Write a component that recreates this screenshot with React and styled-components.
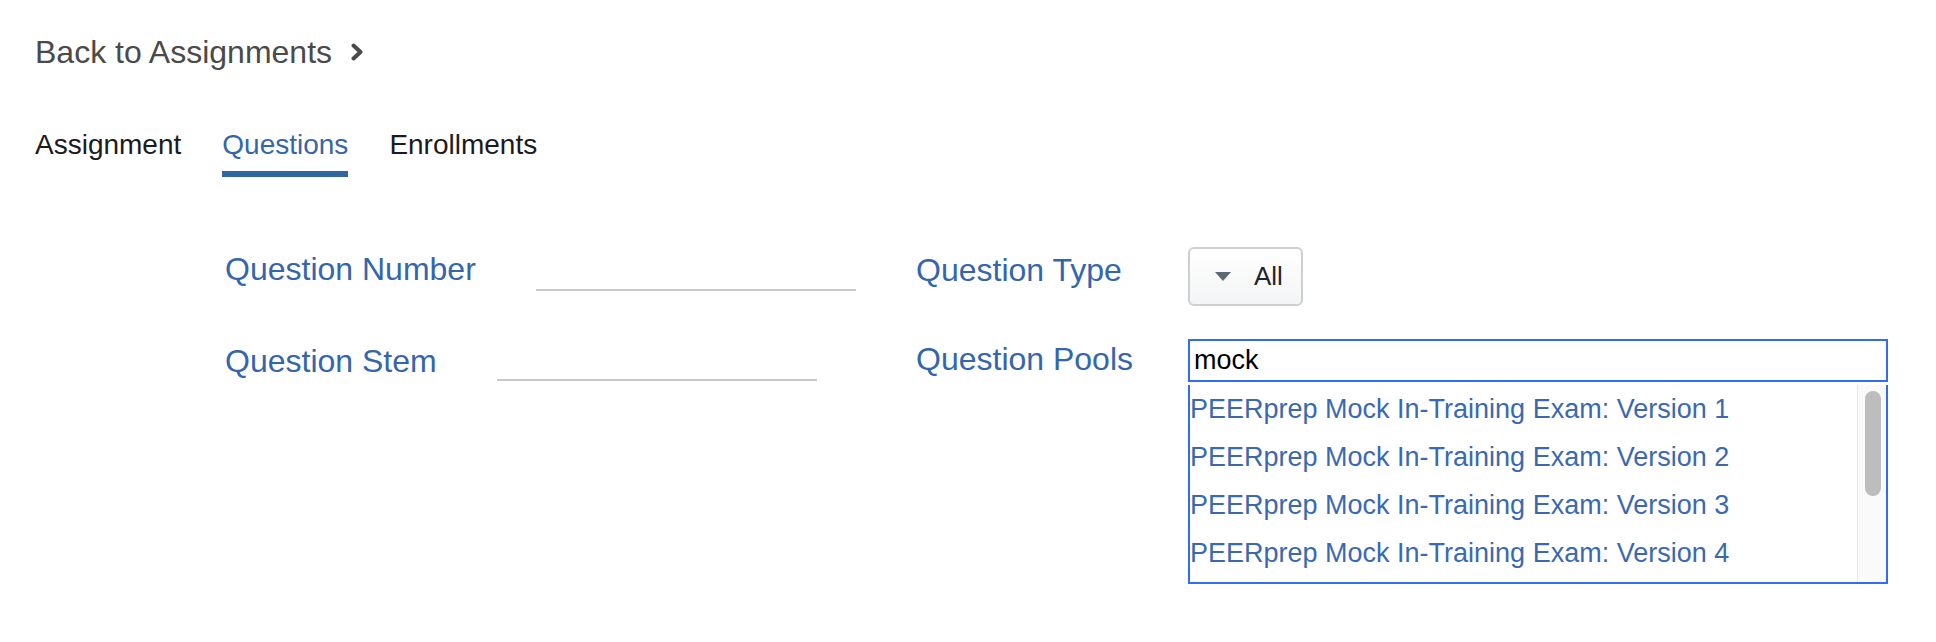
import React, { useState } from "react";
import styled, { createGlobalStyle } from "styled-components";

const GlobalStyle = createGlobalStyle`
  body {
    margin: 0;
    background: #ffffff;
    font-family: "Liberation Sans", Arial, sans-serif;
  }
`;

const Page = styled.div`
  padding: 32px 0 40px 35px;
`;

const BackLink = styled.a`
  display: inline-flex;
  align-items: center;
  gap: 19px;
  font-size: 32px;
  line-height: 40px;
  color: #4a4a4a;
  text-decoration: none;
  cursor: pointer;
`;

const Tabs = styled.nav`
  display: flex;
  gap: 41px;
  margin-top: 55px;
`;

const Tab = styled.div`
  font-size: 28px;
  line-height: 36px;
  padding-bottom: 8px;
  border-bottom: 6px solid ${(p) => (p.$active ? "#2f66a0" : "transparent")};
  color: ${(p) => (p.$active ? "#3567a5" : "#1b1b1b")};
  cursor: pointer;
`;

const Form = styled.div`
  display: grid;
  grid-template-columns: 691px 272px 700px;
  row-gap: 33px;
  margin: 70px 0 0 190px;
  align-items: start;
`;

const Field = styled.div`
  display: flex;
  align-items: flex-start;
  gap: 60px;
`;

const Label = styled.label`
  font-size: 32px;
  line-height: 40px;
  color: #3566ab;
  padding-top: ${(p) => p.$offset || 0}px;
  white-space: nowrap;
`;

const LineInput = styled.input`
  width: 320px;
  height: 40px;
  box-sizing: border-box;
  margin-top: ${(p) => p.$top || 0}px;
  border: 0;
  border-bottom: 2px solid #c9c9c9;
  background: transparent;
  outline: none;
  font-family: inherit;
  font-size: 27px;
`;

const TypeButton = styled.button`
  display: flex;
  align-items: center;
  gap: 23px;
  width: 115px;
  height: 59px;
  box-sizing: border-box;
  padding: 0 0 0 25px;
  border: 2px solid #cdcfd1;
  border-radius: 6px;
  background: linear-gradient(#ffffff, #f3f4f5);
  font-family: "Liberation Sans", Arial, sans-serif;
  font-size: 26px;
  color: #212529;
  cursor: pointer;
`;

const Caret = styled.span`
  width: 0;
  height: 0;
  border-left: 8px solid transparent;
  border-right: 8px solid transparent;
  border-top: 9px solid #5d6873;
`;

const PoolPicker = styled.div`
  display: flex;
  flex-direction: column;
  gap: 3px;
  width: 700px;
`;

const SearchInput = styled.input`
  width: 100%;
  height: 43px;
  box-sizing: border-box;
  padding: 0 4px;
  border: 2px solid #2f6df2;
  outline: none;
  font-family: "Liberation Sans", Arial, sans-serif;
  font-size: 27px;
  color: #000000;
`;

const PoolBox = styled.div`
  display: flex;
  height: 199px;
  box-sizing: border-box;
  border: 2px solid #2f6df2;
  border-top: 0;
`;

const PoolList = styled.ul`
  flex: 1;
  list-style: none;
  margin: 0;
  padding: 0;
  overflow: hidden;
`;

const PoolItem = styled.li`
  font-size: 27px;
  line-height: 48px;
  color: #3a69b0;
  white-space: nowrap;
  cursor: pointer;
`;

const ScrollTrack = styled.div`
  width: 28px;
  padding-top: 6px;
  background: #fafafa;
  border-left: 1px solid #e6e6e6;
`;

const ScrollThumb = styled.div`
  width: 16px;
  height: 105px;
  margin-left: 7px;
  border-radius: 8px;
  background: #bdbdbd;
`;

const Chevron = () => (
  <svg width="13" height="18" viewBox="0 0 13 18">
    <polyline
      points="2.5,2.5 9.5,9 2.5,15.5"
      fill="none"
      stroke="#4a4a4a"
      strokeWidth="4"
      strokeLinecap="round"
      strokeLinejoin="round"
    />
  </svg>
);

const pools = [1, 2, 3, 4, 5, 6, 7].map(
  (n) => `PEERprep Mock In-Training Exam: Version ${n}`
);

export default function App() {
  const [search, setSearch] = useState("mock");
  const [tab, setTab] = useState("Questions");

  return (
    <Page>
      <GlobalStyle />
      <BackLink>
        Back to Assignments
        <Chevron />
      </BackLink>

      <Tabs>
        {["Assignment", "Questions", "Enrollments"].map((t) => (
          <Tab key={t} $active={t === tab} onClick={() => setTab(t)}>
            {t}
          </Tab>
        ))}
      </Tabs>

      <Form>
        <Field>
          <Label $offset={2}>Question Number</Label>
          <LineInput $top={4} />
        </Field>
        <Label $offset={3}>Question Type</Label>
        <div>
          <TypeButton>
            <Caret />
            All
          </TypeButton>
        </div>

        <Field>
          <Label $offset={2}>Question Stem</Label>
          <LineInput $top={2} />
        </Field>
        <Label $offset={0}>Question Pools</Label>
        <PoolPicker>
          <SearchInput
            value={search}
            onChange={(e) => setSearch(e.target.value)}
          />
          <PoolBox>
            <PoolList>
              {pools.slice(0, 4).map((p) => (
                <PoolItem key={p}>{p}</PoolItem>
              ))}
            </PoolList>
            <ScrollTrack>
              <ScrollThumb />
            </ScrollTrack>
          </PoolBox>
        </PoolPicker>
      </Form>
    </Page>
  );
}
